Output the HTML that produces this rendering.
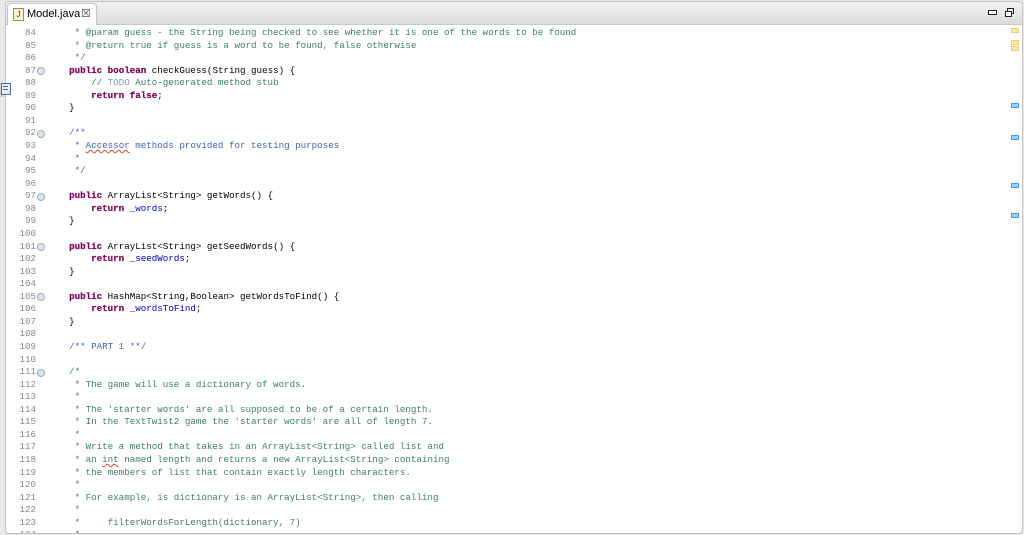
<!DOCTYPE html>
<html><head><meta charset="utf-8"><style>
html,body{margin:0;padding:0;width:1024px;height:535px;overflow:hidden;background:#e8e8e8;font-family:"Liberation Sans",sans-serif}
#win{position:absolute;left:5px;top:1px;width:1016px;height:531px;background:#fff;border:1px solid #c4c4c4;border-radius:4px;overflow:hidden}
#tabbar{position:absolute;left:0;top:0;right:0;height:22px;background:linear-gradient(#f2f2f2,#dcdcdc);border-bottom:1px solid #c8c8c8}
#tab{position:absolute;left:1px;top:1px;width:88px;height:21px;background:#fff;border:1px solid #c4c4c4;border-bottom:none;border-radius:4px 4px 0 0;font-size:11px;color:#000}
#tab .ic{position:absolute;left:5px;top:4px;width:9px;height:11px;border:1px solid #b08a40;background:#fff4d0;font-size:8px;line-height:11px;text-align:center;color:#335}
#tab .t{position:absolute;left:19px;top:4px}
#tab .x{position:absolute;left:73px;top:3px;font-size:11px;color:#444}
.ln{position:absolute;left:0;width:30px;text-align:right;color:#888;font-family:"Liberation Mono",monospace;font-size:9.2px}
.l{position:absolute;left:41px;color:#000;font-family:"Liberation Mono",monospace;font-size:9.2px;white-space:pre}
.k{color:#7f0055;font-weight:600;-webkit-text-stroke:0.2px #7f0055}
.c{color:#3f7f5f}
.j{color:#3f5fbf}
.f{color:#0000c0}
.td{color:#7f9fbf}
.fold{position:absolute;left:31px;width:6px;height:6px;border:1px solid #9ab;border-radius:50%;background:#dde6ee}
.m{position:absolute;left:1005px;width:6px;height:3px;border:1px solid}
.y{border-color:#f2cf6a;background:#fbeab0}
.b{border-color:#3a9ee8;background:#9fd0f5}
.sq{text-decoration:underline wavy #e04030;text-decoration-thickness:1px}
</style></head><body>
<div style="position:absolute;left:0;top:83px;width:4px;height:14px;background:#d0d0d0"></div>
<div id="win">
<div id="tabbar">
 <div id="tab"><div class="ic">J</div><span class="t">Model.java</span><span class="x">☒</span></div>
 <div style="position:absolute;left:982px;top:8px;width:7px;height:3px;border:1px solid #222;background:#fff"></div>
 <div style="position:absolute;left:1001px;top:6px;width:5px;height:4px;border:1px solid #222"></div>
 <div style="position:absolute;left:999px;top:9px;width:5px;height:4px;border:1px solid #222;background:#fff"></div>
</div>
<div id="lines"></div>
</div>
<div style="position:absolute;left:1px;top:83px;width:8px;height:10px;border:1px solid #4a6aa8;background:#e6eefa"></div>
<div style="position:absolute;left:3px;top:86px;width:5px;height:1px;background:#4a6aa8"></div>
<div style="position:absolute;left:3px;top:89px;width:5px;height:1px;background:#4a6aa8"></div>
<script>
var L=[
[84,'<span class="c">     * @param guess - the String being checked to see whether it is one of the words to be found</span>'],
[85,'<span class="c">     * @return true if guess is a word to be found, false otherwise</span>'],
[86,'<span class="c">     */</span>'],
[87,'    <span class="k">public</span> <span class="k">boolean</span> checkGuess(String guess) {',1],
[88,'        <span class="c">// </span><span class="td">TODO</span><span class="c"> Auto-generated method stub</span>'],
[89,'        <span class="k">return</span> <span class="k">false</span>;'],
[90,'    }'],
[91,''],
[92,'    <span class="j">/**</span>',1],
[93,'<span class="j">     * <span class="sq">Accessor</span> methods provided for testing purposes</span>'],
[94,'<span class="j">     *</span>'],
[95,'<span class="j">     */</span>'],
[96,''],
[97,'    <span class="k">public</span> ArrayList&lt;String&gt; getWords() {',1],
[98,'        <span class="k">return</span> <span class="f">_words</span>;'],
[99,'    }'],
[100,''],
[101,'    <span class="k">public</span> ArrayList&lt;String&gt; getSeedWords() {',1],
[102,'        <span class="k">return</span> <span class="f">_seedWords</span>;'],
[103,'    }'],
[104,''],
[105,'    <span class="k">public</span> HashMap&lt;String,Boolean&gt; getWordsToFind() {',1],
[106,'        <span class="k">return</span> <span class="f">_wordsToFind</span>;'],
[107,'    }'],
[108,''],
[109,'    <span class="j">/** PART 1 **/</span>'],
[110,''],
[111,'    <span class="c">/*</span>',1],
[112,'<span class="c">     * The game will use a dictionary of words.</span>'],
[113,'<span class="c">     *</span>'],
[114,'<span class="c">     * The \'starter words\' are all supposed to be of a certain length.</span>'],
[115,'<span class="c">     * In the TextTwist2 game the \'starter words\' are all of length 7.</span>'],
[116,'<span class="c">     *</span>'],
[117,'<span class="c">     * Write a method that takes in an ArrayList&lt;String&gt; called list and</span>'],
[118,'<span class="c">     * an <span class="sq">int</span> named length and returns a new ArrayList&lt;String&gt; containing</span>'],
[119,'<span class="c">     * the members of list that contain exactly length characters.</span>'],
[120,'<span class="c">     *</span>'],
[121,'<span class="c">     * For example, is dictionary is an ArrayList&lt;String&gt;, then calling</span>'],
[122,'<span class="c">     *</span>'],
[123,'<span class="c">     *     filterWordsForLength(dictionary, 7)</span>'],
[124,'<span class="c">     *</span>']
];
var h='';
L.forEach(function(r,i){var t=25+i*12.56;
h+='<div class="ln" style="top:'+t+'px">'+r[0]+'</div><div class="l" style="top:'+t+'px">'+r[1]+'</div>';
if(r[2])h+='<div class="fold" style="top:'+(t+2.5)+'px"></div>';});
[[28,'y'],[40,'y'],[46,'y'],[103,'b'],[135,'b'],[183,'b'],[213,'b']].forEach(function(m){h+='<div class="m '+m[1]+'" style="top:'+(m[0]-2)+'px"></div>';});
document.getElementById('lines').innerHTML=h;
</script>
</body></html>
